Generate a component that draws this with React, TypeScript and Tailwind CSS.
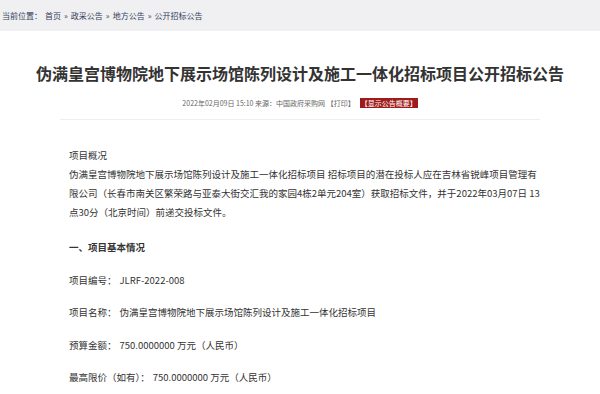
import React from 'react';

const crumbs = ['首页', '政采公告', '地方公告', '公开招标公告'];

const items = [
  { label: '项目编号：', value: 'JLRF-2022-008' },
  { label: '项目名称：', value: '伪满皇宫博物院地下展示场馆陈列设计及施工一体化招标项目' },
  { label: '预算金额：', value: '750.0000000 万元（人民币）' },
  { label: '最高限价（如有）：', value: '750.0000000 万元（人民币）' },
];

export default function App() {
  return (
    <div
      className="w-[600px] h-[394px] overflow-hidden bg-white text-[#333]"
      style={{ fontFamily: '"Noto Sans CJK SC", "Noto Sans", sans-serif' }}
    >
      {/* Breadcrumb */}
      <div className="h-[31px] bg-[#f0f0f2] flex items-center pl-[2px] text-[8px] text-[#34405a]">
        <span>当前位置：</span>
        {crumbs.map((c, i) => (
          <span key={c} className="ml-[3px]">
            {c}
            {i < crumbs.length - 1 && <span className="ml-[3px]">»</span>}
          </span>
        ))}
      </div>

      {/* Title */}
      <h1 className="mt-[31px] text-center text-[16px] leading-[22px] font-bold text-[#333]">
        伪满皇宫博物院地下展示场馆陈列设计及施工一体化招标项目公开招标公告
      </h1>

      {/* Meta */}
      <div className="mt-[14px] flex justify-center items-center text-[7px] leading-[10px] text-[#666]">
        <span>2022年02月09日 15:10 来源：中国政府采购网 【打印】</span>
        <span className="ml-[5px] bg-[#9e1b1b] text-white px-[1px]">【显示公告概要】</span>
      </div>

      <div className="mx-auto mt-[11px] w-[480px] h-px bg-[#eeeeee]" />

      {/* Body */}
      <div className="ml-[69px] mt-[26px] text-[9.5px] leading-[19px] text-[#333]">
        <p>项目概况</p>
        <p className="whitespace-nowrap">
          伪满皇宫博物院地下展示场馆陈列设计及施工一体化招标项目 招标项目的潜在投标人应在吉林省锐峰项目管理有
          <br />
          限公司（长春市南关区繁荣路与亚泰大街交汇我的家园4栋2单元204室）获取招标文件，并于2022年03月07日 13
          <br />
          点30分（北京时间）前递交投标文件。
        </p>

        <p className="mt-[16px] font-bold">一、项目基本情况</p>

        {items.map((it) => (
          <p key={it.label} className="mt-[13.5px]">
            {it.label}
            <span className="ml-[3px]">{it.value}</span>
          </p>
        ))}
      </div>
    </div>
  );
}
